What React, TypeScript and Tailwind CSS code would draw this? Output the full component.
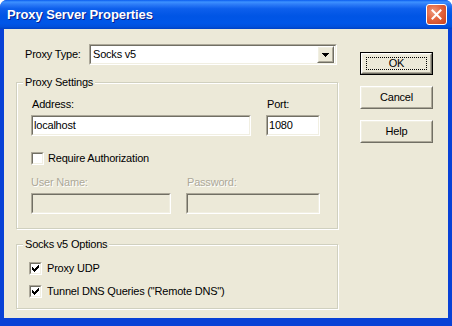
import React from "react";

const font = "font-['Liberation_Sans',Arial,sans-serif]";

function Sunken({ className = "", inner = "", children }: { className?: string; inner?: string; children?: React.ReactNode }) {
  return (
    <div className={`border border-t-[#ACA899] border-l-[#ACA899] border-b-white border-r-white ${className}`}>
      <div className={`h-full border border-t-[#716F64] border-l-[#716F64] border-b-[#F1EFE2] border-r-[#F1EFE2] ${inner}`}>
        {children}
      </div>
    </div>
  );
}

function Raised({ className = "", children }: { className?: string; children?: React.ReactNode }) {
  return (
    <div className={`border border-t-white border-l-white border-r-[#716F64] border-b-[#716F64] ${className}`}>
      <div className="h-full border border-t-[#F1EFE2] border-l-[#F1EFE2] border-r-[#ACA899] border-b-[#ACA899] bg-[#ECE9D8] flex items-center justify-center">
        {children}
      </div>
    </div>
  );
}

function Check({ checked }: { checked?: boolean }) {
  return (
    <Sunken className="w-[13px] h-[13px] shrink-0" inner="bg-white flex items-center justify-center">
      {checked && (
        <svg width="7" height="7" viewBox="0 0 7 7" shapeRendering="crispEdges">
          <path
            d="M0 2h1v3h-1z M1 3h1v3h-1z M2 4h1v3h-1z M3 3h1v3h-1z M4 2h1v3h-1z M5 1h1v3h-1z M6 0h1v3h-1z"
            fill="#000"
          />
        </svg>
      )}
    </Sunken>
  );
}

function Button({ label, isDefault }: { label: string; isDefault?: boolean }) {
  if (isDefault) {
    return (
      <div className="w-[73px] h-[23px] border border-black">
        <Raised className="h-full">
          <div className="w-[61px] h-[13px] border border-dotted border-black flex items-center justify-center leading-none">
            {label}
          </div>
        </Raised>
      </div>
    );
  }
  return <Raised className="w-[73px] h-[23px]">{label}</Raised>;
}

function Group({ title, className = "", children }: { title: string; className?: string; children?: React.ReactNode }) {
  return (
    <fieldset
      className={`border border-[#D0D0BF] shadow-[inset_1px_1px_0_#fff,1px_1px_0_#fff] ${className}`}
    >
      <legend className="ml-[6px] px-[2px] bg-[#ECE9D8] leading-[13px]">{title}</legend>
      {children}
    </fieldset>
  );
}

export default function App() {
  return (
    <div className={`w-[452px] h-[326px] bg-white ${font} text-[11px] text-black`}>
      <div className="w-full h-full rounded-t-[7px] bg-[#0841D6] flex flex-col overflow-hidden">
        {/* Title bar */}
        <div className="h-[29px] shrink-0 flex items-center justify-between pl-[7px] pr-[5px] bg-[linear-gradient(to_bottom,#0A5CEF_0%,#3D92FF_7%,#2F7EF8_14%,#0D5FEC_30%,#0055E5_55%,#0056E8_80%,#0150DC_92%,#0041C4_100%)]">
          <span className="text-white font-bold text-[13px] pt-[1px] tracking-[-0.1px] [text-shadow:1px_1px_0_#0A1E8A]">
            Proxy Server Properties
          </span>
          <div className="w-[21px] h-[21px] rounded-[3px] border border-white bg-[radial-gradient(circle_at_35%_35%,#EE9A7E_0%,#E2653F_45%,#C9401B_100%)] flex items-center justify-center">
            <svg width="11" height="11" viewBox="0 0 11 11">
              <path d="M1.5 1.5 L9.5 9.5 M9.5 1.5 L1.5 9.5" stroke="#fff" strokeWidth="2" strokeLinecap="square" />
            </svg>
          </div>
        </div>

        {/* Client area */}
        <div className="flex-1 mx-[4px] mb-[8px] bg-[#ECE9D8] flex pl-[12px] pt-[15px] tracking-[-0.2px]">
          {/* Left column */}
          <div className="w-[322px] flex flex-col">
            <div className="h-[21px] flex items-center">
              <span className="ml-[9px] w-[64px]">Proxy Type:</span>
              <Sunken className="w-[248px] h-[21px]" inner="bg-white flex items-center justify-between pr-[1px]">
                <span className="pl-[2px]">Socks v5</span>
                <Raised className="w-[17px] h-[17px]">
                  <svg width="7" height="4" viewBox="0 0 7 4" shapeRendering="crispEdges">
                    <path d="M0 0h7v1h-1v1h-1v1h-1v1h-1v-1h-1v-1h-1v-1h-1z" fill="#000" />
                  </svg>
                </Raised>
              </Sunken>
            </div>

            <Group title="Proxy Settings" className="mt-[11px]">
              <div className="pl-[14px] pr-[17px] pt-[9px] pb-[14px]">
                <div className="flex gap-[15px]">
                  <div className="flex flex-col">
                    <span className="leading-[13px] ml-[1px]">Address:</span>
                    <Sunken className="w-[220px] h-[21px] mt-[4px]" inner="bg-white flex items-center pl-[1px]">
                      localhost
                    </Sunken>
                  </div>
                  <div className="flex flex-col">
                    <span className="leading-[13px] ml-[1px]">Port:</span>
                    <Sunken className="w-[54px] h-[21px] mt-[4px]" inner="bg-white flex items-center pl-[1px]">
                      1080
                    </Sunken>
                  </div>
                </div>
                <label className="flex items-center gap-[4px] mt-[16px] h-[13px]">
                  <Check />
                  <span>Require Authorization</span>
                </label>
                <div className="flex gap-[15px] mt-[11px]">
                  <div className="flex flex-col">
                    <span className="leading-[13px] text-[#ACA899] [text-shadow:1px_1px_0_#fff]">User Name:</span>
                    <Sunken className="w-[140px] h-[21px] mt-[4px]" inner="bg-[#ECE9D8]" />
                  </div>
                  <div className="flex flex-col">
                    <span className="leading-[13px] ml-[1px] text-[#ACA899] [text-shadow:1px_1px_0_#fff]">Password:</span>
                    <Sunken className="w-[134px] h-[21px] mt-[4px]" inner="bg-[#ECE9D8]" />
                  </div>
                </div>
              </div>
            </Group>

            <Group title="Socks v5 Options" className="mt-[9px]">
              <div className="pl-[12px] pt-[11px] pb-[10px] flex flex-col gap-[10px]">
                <label className="flex items-center gap-[5px] h-[13px]">
                  <Check checked />
                  <span>Proxy UDP</span>
                </label>
                <label className="flex items-center gap-[5px] h-[13px]">
                  <Check checked />
                  <span>Tunnel DNS Queries ("Remote DNS")</span>
                </label>
              </div>
            </Group>
          </div>

          {/* Right column */}
          <div className="ml-[22px] pt-[8px] flex flex-col gap-[11px]">
            <Button label="OK" isDefault />
            <Button label="Cancel" />
            <Button label="Help" />
          </div>
        </div>
      </div>
    </div>
  );
}
